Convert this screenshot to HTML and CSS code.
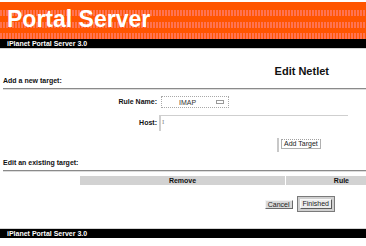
FILE: index.html
```html
<!DOCTYPE html>
<html lang="en">
<head>
  <meta charset="UTF-8">
  <meta name="viewport" content="width=device-width, initial-scale=1.0">
  <title>Edit Netlet</title>
  <link rel="stylesheet" href="styles.css">
</head>
<body>
  <div class="masthead">
    <h1>Portal Server</h1>
  </div>
  <div class="brandbar top">iPlanet Portal Server 3.0</div>

  <h2 class="page-title">Edit Netlet</h2>

  <div class="section-label">Add a new target:</div>
  <hr class="rule">

  <div class="form-grid">
    <label class="field-label">Rule Name:</label>
    <div class="select">
      <span>IMAP</span>
      <i class="select-icon"></i>
    </div>
    <label class="field-label">Host:</label>
    <div class="text-field"><span class="caret">I</span></div>
  </div>

  <div class="add-row">
    <span class="edge"></span>
    <button class="btn add">Add Target</button>
  </div>

  <div class="section-label existing">Edit an existing target:</div>
  <hr class="rule">

  <div class="targets">
    <div class="th remove">Remove</div>
    <div class="th rule-col">Rule</div>
  </div>

  <div class="actions">
    <button class="btn cancel">Cancel</button>
    <span class="default-frame"><button class="btn finished">Finished</button></span>
  </div>

  <div class="brandbar bottom">iPlanet Portal Server 3.0</div>
</body>
</html>
```

FILE: styles.css
```css
body {
  margin: 0;
  padding-top: 2px;
  font-family: 'Liberation Sans', Arial, sans-serif;
  background: white;
  color: #111;
}

.masthead {
  height: 37px;
  background-color: #ff5500;
  background-image:
    repeating-linear-gradient(90deg, #ff7352 0 2px, transparent 2px 3px),
    repeating-linear-gradient(90deg, #ff7352 0 2px, transparent 2px 3px),
    repeating-linear-gradient(90deg, #ff7352 0 2px, transparent 2px 3px);
  background-size: 100% 6px;
  background-position: 0 8px, 0 20px, 0 31px;
  background-repeat: no-repeat;
}

.masthead h1 {
  margin: 0;
  padding: 6px 0 0 7px;
  font-size: 23px;
  line-height: 23px;
  font-weight: bold;
  color: white;
}

.brandbar {
  height: 9px;
  padding-left: 7px;
  background: #000;
  color: white;
  font-size: 7px;
  line-height: 9px;
  font-weight: bold;
}

.brandbar.top {
  border-bottom: 1px solid #d4d4d4;
}

.brandbar.bottom {
  margin-top: 16px;
  border-top: 1px solid #d4d4d4;
}

.page-title {
  margin: 17px 37px 0 0;
  text-align: right;
  font-size: 11px;
  line-height: 11px;
  font-weight: bold;
}

.section-label {
  margin: 0 0 0 3px;
  font-size: 7px;
  line-height: 8px;
  font-weight: bold;
}

.section-label.existing {
  margin-top: 7px;
}

.rule {
  margin: 3px 0 0 3px;
  height: 0;
  border: 0;
  border-top: 1px solid #8a8a8a;
  border-bottom: 1px solid #dcdcdc;
}

.form-grid {
  display: grid;
  grid-template-columns: 157px 189px;
  column-gap: 2px;
  row-gap: 7px;
  align-items: center;
  margin-top: 6px;
}

.field-label {
  text-align: right;
  font-size: 7px;
  line-height: 8px;
  font-weight: bold;
}

.select {
  display: flex;
  align-items: center;
  width: 66px;
  height: 10px;
  margin-left: 2px;
  border: 1px dotted #a8a8a8;
  font-size: 7px;
  color: #333;
}

.select span {
  margin-left: 17px;
}

.select-icon {
  width: 6px;
  height: 2px;
  margin-left: auto;
  margin-right: 4px;
  border: 1px solid #9a9a9a;
}

.text-field {
  height: 15px;
  border-top: 1px solid #cfcfcf;
  border-left: 2px solid #cfcfcf;
}

.caret {
  display: block;
  margin: 3px 0 0 1px;
  font-family: 'Liberation Serif', serif;
  font-size: 7px;
  line-height: 7px;
  color: #8a8a8a;
}

.add-row {
  display: flex;
  gap: 2px;
  margin-top: 7px;
  padding-left: 277px;
}

.edge {
  width: 2px;
  height: 14px;
  background: #c8c8c8;
}

.btn {
  padding: 0 2px;
  font-family: inherit;
  font-size: 7px;
  line-height: 8px;
  color: #222;
  cursor: pointer;
}

.btn.add {
  height: 10px;
  margin-top: 1px;
  background: white;
  border: 1px solid #b0b0b0;
  border-top: 1px dotted #a0a0a0;
}

.targets {
  display: flex;
  margin: 4px 0 0 80px;
  height: 9px;
  background: #d2d2d2;
  font-size: 7px;
  line-height: 9px;
  font-weight: bold;
}

.th.remove {
  width: 205px;
  text-align: center;
  border-right: 1px solid white;
}

.th.rule-col {
  flex: 1;
  text-align: right;
  padding-right: 17px;
}

.actions {
  display: flex;
  align-items: center;
  justify-content: flex-end;
  gap: 4px;
  margin-top: 11px;
  padding-right: 31px;
}

.btn.cancel {
  height: 9px;
  background: #dadada;
  border: 1px solid;
  border-color: #f4f4f4 #6a6a6a #6a6a6a #f4f4f4;
}

.default-frame {
  display: flex;
  padding: 2px;
  background: #d0d0d0;
  border: 1px solid #7a7a7a;
}

.btn.finished {
  height: 10px;
  background: #ececec;
  border: 1px solid;
  border-color: #fafafa #5a5a5a #5a5a5a #fafafa;
}
```
